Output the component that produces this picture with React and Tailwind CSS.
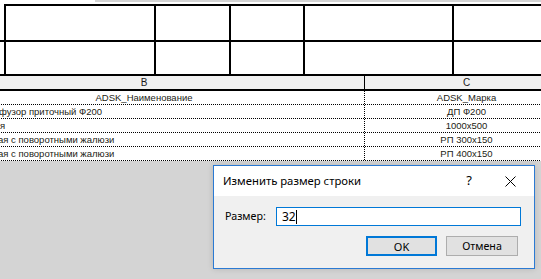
import React from 'react';

const rows = [
    { b: 'ADSK_Наименование', c: 'ADSK_Марка', center: true },
    { b: 'фузор приточный Ф200', c: 'ДП Ф200', shift: 'ml-[75px]' },
    { b: 'я', c: '1000x500', shift: 'ml-[76px]' },
    { b: 'ая с поворотными жалюзи', c: 'РП 300x150', shift: 'ml-[74px]' },
    { b: 'ая с поворотными жалюзи', c: 'РП 400x150', shift: 'ml-[74px]' },
];

function GridRow({ lead }) {
    return (
        <div className="flex h-full">
            {lead && <div className="w-[4px] shrink-0" />}
            <div className="w-[150px] shrink-0 border-l-2 border-black" />
            <div className="w-[75px] shrink-0 border-l-2 border-black" />
            <div className="w-[74px] shrink-0 border-l-2 border-black" />
            <div className="w-[149px] shrink-0 border-l-2 border-black" />
            <div className="flex-1 border-l-2 border-black" />
        </div>
    );
}

export default function App() {
    return (
        <div className="relative w-[541px] h-[279px] overflow-hidden bg-[#d4d4d4] font-['Liberation_Sans',Arial,sans-serif]">
            {/* sheet area */}
            <div className="bg-white">
                <div className="flex h-[2px]">
                    <div className="w-[95px] bg-white" />
                    <div className="flex-1 bg-[#d4d4d4]" />
                </div>
                <div className="h-[2px]" />
                <div className="ml-[4px] h-[36px] border-t-2 border-black">
                    <GridRow />
                </div>
                <div className="h-[36px] border-t-2 border-b-2 border-black">
                    <GridRow lead />
                </div>
            </div>

            {/* schedule table */}
            <div className="ml-[-76px] w-[644px]">
                <div className="flex h-[15px] bg-[#f0f0f0] border-b-2 border-black text-[10px] text-[#1a1a1a] leading-[13px]">
                    <div className="w-[440px] text-center">B</div>
                    <div className="flex-1 border-l border-black text-center">C</div>
                </div>
                {rows.map((r, i) => (
                    <div key={i} className="flex h-[14px] bg-white border-b border-dotted border-black text-[9.5px] leading-[13px] text-[#221c14]">
                        <div className={`w-[440px] whitespace-nowrap overflow-hidden ${r.center ? 'text-center' : ''}`}>
                            <span className={r.shift || ''}>{r.b}</span>
                        </div>
                        <div className="flex-1 border-l border-dotted border-black text-center whitespace-nowrap">{r.c}</div>
                    </div>
                ))}
            </div>

            {/* dialog */}
            <div className="absolute left-[213px] top-[165px] w-[322px] h-[104px] border border-[#2b7ad3] bg-white flex flex-col font-['Noto_Sans',sans-serif] text-black shadow-[0_0_6px_rgba(0,0,0,0.15)]">
                <div className="h-[30px] flex items-center pl-[9px] pr-[18px] text-[11.3px]">
                    <span>Изменить размер строки</span>
                    <span className="ml-auto mr-[33px] text-[13px]">?</span>
                    <svg width="11" height="11" viewBox="0 0 11 11">
                        <path d="M0.5 0.5 L10.5 10.5 M10.5 0.5 L0.5 10.5" stroke="#000" strokeWidth="1" />
                    </svg>
                </div>
                <div className="flex-1 bg-[#f0f0f0] px-[11px] pt-[11px]">
                    <div className="flex items-center">
                        <span className="w-[51px] text-[10.7px]">Размер:</span>
                        <div className="w-[245px] h-[19px] border border-[#0078d7] bg-white flex items-center pl-[5px] text-[12px]">
                            32<span className="inline-block w-px h-[14px] bg-black" />
                        </div>
                    </div>
                    <div className="flex justify-end gap-[9px] mt-[10px] pr-[5px]">
                        <button className="w-[71px] h-[20px] border-2 border-[#0078d7] bg-[#e1e1e1] text-[11px] leading-none">OK</button>
                        <button className="w-[72px] h-[20px] border border-[#adadad] bg-[#e1e1e1] text-[10.7px] leading-none">Отмена</button>
                    </div>
                </div>
            </div>
        </div>
    );
}
